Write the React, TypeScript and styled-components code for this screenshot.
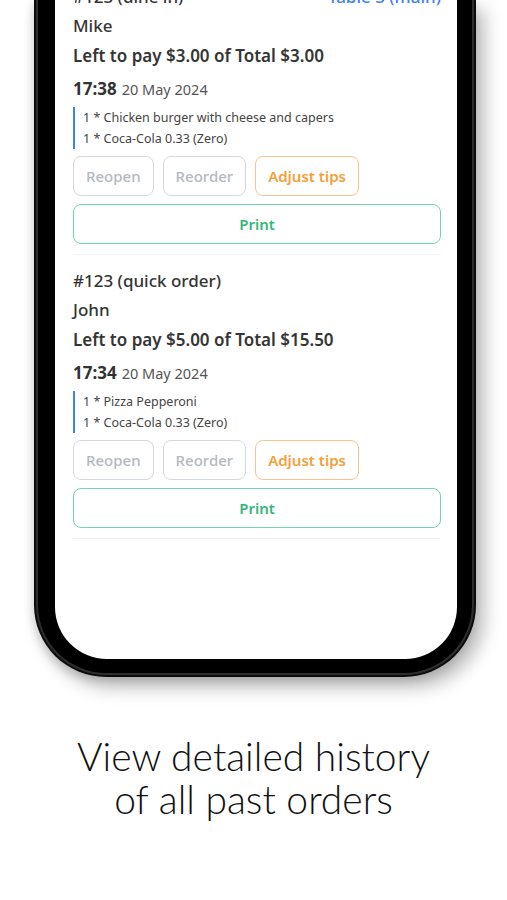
import React from "react";
import styled, { createGlobalStyle } from "styled-components";

const GlobalStyle = createGlobalStyle`
  html, body {
    margin: 0;
    padding: 0;
    background: #ffffff;
  }
  body {
    width: 507px;
    height: 900px;
    overflow: hidden;
  }
`;

const Page = styled.div`
  display: flex;
  flex-direction: column;
  align-items: center;
  width: 507px;
  height: 900px;
  overflow: hidden;
`;

const Phone = styled.div`
  width: 442px;
  margin-left: 3px;
  box-sizing: border-box;
  border: 2px solid #0b0b0b;
  border-top: none;
  border-radius: 0 0 72px 72px;
  background: #2e2e2e;
  padding: 0 2px 2px;
  box-shadow: 8px 10px 18px rgba(0, 0, 0, 0.28), -2px 4px 8px rgba(0, 0, 0, 0.12);
`;

const Bezel = styled.div`
  border: solid #000;
  border-width: 0 15px 14px 17px;
  border-radius: 0 0 68px 68px;
  background: #000;
`;

const Screen = styled.div`
  height: 659px;
  overflow: hidden;
  background: #fff;
  border-radius: 0 0 52px 52px;
  padding: 0 16px 0 18px;
`;

const OrderList = styled.div`
  margin-top: -29px;
  display: flex;
  flex-direction: column;
`;

const Order = styled.div`
  display: flex;
  flex-direction: column;
  padding: 10px 0;
  border-bottom: 1px solid #f1f2f3;
  font-family: "Noto Sans", "Open Sans", sans-serif;
  color: #353535;
`;

const HeaderRow = styled.div`
  display: flex;
  justify-content: space-between;
  align-items: center;
  height: 30px;
  font-size: 17px;
  font-weight: 500;
`;

const TableTag = styled.span`
  color: #3b82f6;
  font-weight: 500;
`;

const Line = styled.div<{ $weight?: number }>`
  height: 30px;
  line-height: 30px;
  font-size: 17px;
  font-weight: ${({ $weight }) => $weight ?? 500};
`;

const TimeRow = styled.div`
  margin-top: 2px;
  height: 32px;
  display: flex;
  align-items: baseline;
  gap: 5px;
  line-height: 32px;
`;

const Time = styled.span`
  font-size: 17px;
  font-weight: 700;
  color: #333;
`;

const DateText = styled.span`
  font-size: 14.5px;
  color: #555;
`;

const Items = styled.ul`
  list-style: none;
  margin: 2px 0 0;
  padding: 0 0 0 8px;
  border-left: 2px solid #3b82f6;
`;

const Item = styled.li`
  font-size: 12.5px;
  line-height: 21px;
  color: #444;
`;

const Actions = styled.div`
  display: flex;
  gap: 9px;
  margin-top: 7px;
`;

const Button = styled.button<{ $tone: "muted" | "warn" | "ok"; $wide?: boolean }>`
  box-sizing: border-box;
  height: 40px;
  padding: 0 12px;
  border-radius: 8px;
  background: #fff;
  font-family: "Noto Sans", "Open Sans", sans-serif;
  font-size: 15px;
  font-weight: ${({ $tone }) => ($tone === "muted" ? 500 : 600)};
  width: ${({ $wide }) => ($wide ? "100%" : "auto")};
  border: 1.5px solid
    ${({ $tone }) =>
      $tone === "warn" ? "#f9c48f" : $tone === "ok" ? "#72d5ab" : "#d5d8dc"};
  color: ${({ $tone }) =>
    $tone === "warn" ? "#f5a03a" : $tone === "ok" ? "#35b87c" : "#b3b9c0"};
`;

const PrintButton = styled(Button)`
  margin-top: 8px;
`;

const Caption = styled.div`
  margin-top: 58px;
  font-family: Lato, "DejaVu Sans", sans-serif;
  font-weight: 300;
  font-size: 39px;
  line-height: 43px;
  color: #111;
  text-align: center;
`;

type OrderData = {
  id: string;
  kind: string;
  table?: string;
  name: string;
  left: string;
  total: string;
  time: string;
  date: string;
  items: string[];
};

const orders: OrderData[] = [
  {
    id: "#123",
    kind: "(dine in)",
    table: "Table 3 (main)",
    name: "Mike",
    left: "$3.00",
    total: "$3.00",
    time: "17:38",
    date: "20 May 2024",
    items: ["1 * Chicken burger with cheese and capers", "1 * Coca-Cola 0.33 (Zero)"],
  },
  {
    id: "#123",
    kind: "(quick order)",
    name: "John",
    left: "$5.00",
    total: "$15.50",
    time: "17:34",
    date: "20 May 2024",
    items: ["1 * Pizza Pepperoni", "1 * Coca-Cola 0.33 (Zero)"],
  },
];

const OrderCard = ({ order }: { order: OrderData }) => (
  <Order>
    <HeaderRow>
      <span>
        {order.id} {order.kind}
      </span>
      {order.table && <TableTag>{order.table}</TableTag>}
    </HeaderRow>
    <Line>{order.name}</Line>
    <Line $weight={600}>
      Left to pay {order.left} of Total {order.total}
    </Line>
    <TimeRow>
      <Time>{order.time}</Time>
      <DateText>{order.date}</DateText>
    </TimeRow>
    <Items>
      {order.items.map((it) => (
        <Item key={it}>{it}</Item>
      ))}
    </Items>
    <Actions>
      <Button $tone="muted">Reopen</Button>
      <Button $tone="muted">Reorder</Button>
      <Button $tone="warn">Adjust tips</Button>
    </Actions>
    <PrintButton $tone="ok" $wide>
      Print
    </PrintButton>
  </Order>
);

export default function App() {
  return (
    <Page>
      <GlobalStyle />
      <Phone>
        <Bezel>
          <Screen>
            <OrderList>
              {orders.map((o, i) => (
                <OrderCard key={i} order={o} />
              ))}
            </OrderList>
          </Screen>
        </Bezel>
      </Phone>
      <Caption>
        View detailed history
        <br />
        of all past orders
      </Caption>
    </Page>
  );
}
